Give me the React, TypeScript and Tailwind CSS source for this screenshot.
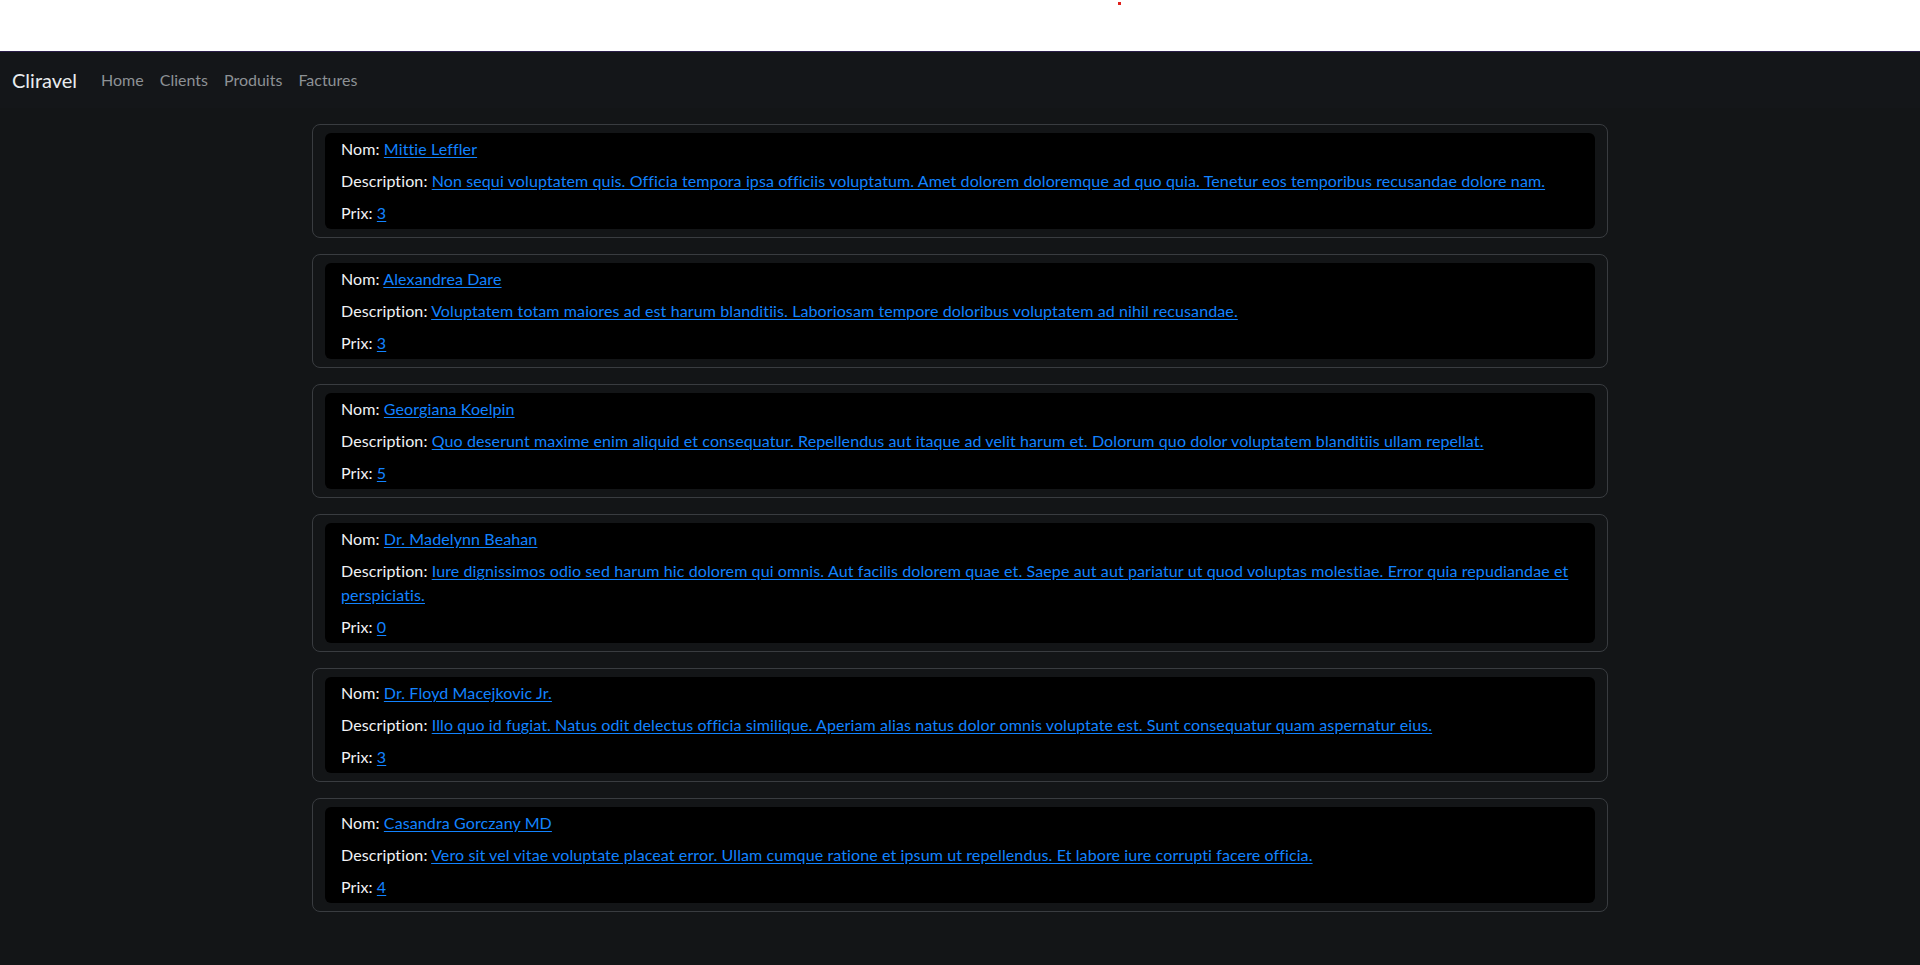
const produits = [
  {
    nom: "Mittie Leffler",
    description:
      "Non sequi voluptatem quis. Officia tempora ipsa officiis voluptatum. Amet dolorem doloremque ad quo quia. Tenetur eos temporibus recusandae dolore nam.",
    prix: 3,
  },
  {
    nom: "Alexandrea Dare",
    description:
      "Voluptatem totam maiores ad est harum blanditiis. Laboriosam tempore doloribus voluptatem ad nihil recusandae.",
    prix: 3,
  },
  {
    nom: "Georgiana Koelpin",
    description:
      "Quo deserunt maxime enim aliquid et consequatur. Repellendus aut itaque ad velit harum et. Dolorum quo dolor voluptatem blanditiis ullam repellat.",
    prix: 5,
  },
  {
    nom: "Dr. Madelynn Beahan",
    description:
      "Iure dignissimos odio sed harum hic dolorem qui omnis. Aut facilis dolorem quae et. Saepe aut aut pariatur ut quod voluptas molestiae. Error quia repudiandae et perspiciatis.",
    prix: 0,
  },
  {
    nom: "Dr. Floyd Macejkovic Jr.",
    description:
      "Illo quo id fugiat. Natus odit delectus officia similique. Aperiam alias natus dolor omnis voluptate est. Sunt consequatur quam aspernatur eius.",
    prix: 3,
  },
  {
    nom: "Casandra Gorczany MD",
    description:
      "Vero sit vel vitae voluptate placeat error. Ullam cumque ratione et ipsum ut repellendus. Et labore iure corrupti facere officia.",
    prix: 4,
  },
];

const linkClass = "text-[#1283ff] underline underline-offset-2";

const ProduitCard = ({ nom, description, prix }: (typeof produits)[number]) => (
  <div className="mb-4 rounded-lg border border-[#393c40] px-3 py-2">
    <div className="rounded-md bg-black px-4 py-1 text-[#f1f3f5]">
      <p className="mb-2 leading-6">
        Nom: <a href="#" className={linkClass}>{nom}</a>
      </p>
      <p className="mb-2 leading-6">
        Description: <a href="#" className={linkClass}>{description}</a>
      </p>
      <p className="leading-6">
        Prix: <a href="#" className={linkClass}>{prix}</a>
      </p>
    </div>
  </div>
);

export default function App() {
  return (
    <div className="min-h-[965px] bg-[#131517] font-['Lato','Noto_Sans',sans-serif] text-base">
      <div className="relative h-[51px] bg-white">
        <span className="absolute left-[1118px] top-[2px] h-[3px] w-[3px] bg-[#e0201c]" />
      </div>
      <nav className="flex h-[57px] items-center border-t border-[#2a1d48] bg-[#141619] px-3">
        <a href="#" className="mr-4 text-xl text-[#e9ecef]">
          Cliravel
        </a>
        <div className="flex">
          {["Home", "Clients", "Produits", "Factures"].map((l) => (
            <a key={l} href="#" className="px-2 text-[#8d9195]">
              {l}
            </a>
          ))}
        </div>
      </nav>
      <main className="mx-auto mt-4 max-w-[1320px] px-3 tracking-[0.11px]">
        {produits.map((p) => (
          <ProduitCard key={p.nom} {...p} />
        ))}
      </main>
    </div>
  );
}
